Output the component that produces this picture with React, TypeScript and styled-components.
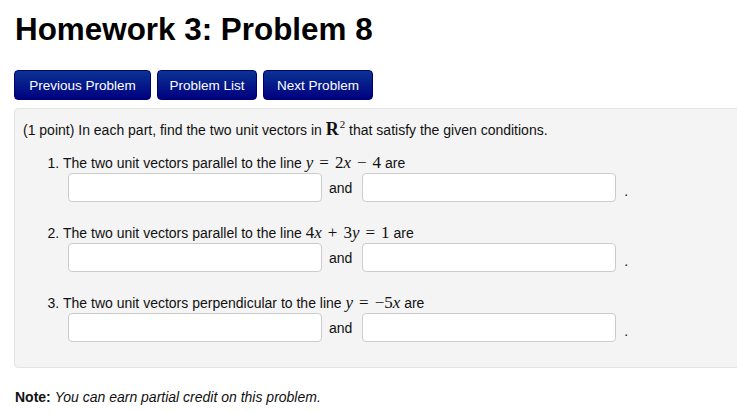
import styled, { createGlobalStyle } from "styled-components";

const Global = createGlobalStyle`
  body {
    margin: 0;
    background: #fff;
    font-family: "Liberation Sans", Arial, sans-serif;
    color: #111;
  }
`;

const Page = styled.div`
  padding: 12px 0 0 14px;
  overflow: hidden;
`;

const Title = styled.h1`
  margin: 0 0 0 1px;
  font-size: 31.4px;
  line-height: 36px;
  font-weight: bold;
  color: #000;
`;

const Nav = styled.div`
  display: flex;
  gap: 6px;
  margin-top: 22px;
`;

const NavButton = styled.button<{ $w: number }>`
  width: ${(p) => p.$w}px;
  height: 30px;
  padding: 0;
  border: 1px solid #00006a;
  border-radius: 4px;
  background: linear-gradient(to bottom, #0b3394, #000080);
  color: #fff;
  font-family: "Liberation Sans", Arial, sans-serif;
  font-size: 13.5px;
  cursor: pointer;
`;

const Well = styled.div`
  margin-top: 8px;
  margin-right: -20px;
  padding: 11px 8px 25px 8px;
  background: #f4f4f4;
  border: 1px solid #e3e3e3;
  border-radius: 4px;
  font-size: 14px;
  line-height: 18px;
`;

const Intro = styled.p`
  margin: 0;
`;

const Parts = styled.ol`
  margin: 15px 0 0 0;
  padding-left: 40px;
`;

const Part = styled.li`
  & + & {
    margin-top: 22px;
  }
`;

const Answers = styled.div`
  display: flex;
  align-items: center;
  margin: 1px 0 0 5px;
`;

const AnswerInput = styled.input`
  box-sizing: border-box;
  width: 254px;
  height: 29px;
  padding: 4px 6px;
  background: #fff;
  border: 1px solid #ccc;
  border-radius: 4px;
  font-size: 14px;
`;

const And = styled.span`
  margin: 0 10px 0 7px;
`;

const Period = styled.span`
  margin: 6px 0 0 8px;
`;

const MathSpan = styled.span`
  font-family: "Liberation Serif", "Times New Roman", serif;
  font-size: 17px;
  line-height: 1;
`;

const V = styled.i`
  font-family: "Liberation Serif", serif;
`;

const Op = styled.span`
  margin: 0 6px;
`;

const Bold = styled.b`
  font-family: "Liberation Serif", serif;
  font-size: 18px;
`;

const Sup = styled.sup`
  font-size: 11px;
  line-height: 0;
  margin-left: 1px;
`;

const Note = styled.p`
  margin: 20px 0 0 1px;
  font-size: 14px;
  line-height: 18px;
  em {
    font-style: italic;
  }
`;

function AnswerRow() {
  return (
    <Answers>
      <AnswerInput type="text" />
      <And>and</And>
      <AnswerInput type="text" />
      <Period>.</Period>
    </Answers>
  );
}

export default function App() {
  return (
    <Page>
      <Global />
      <Title>Homework 3: Problem 8</Title>
      <Nav>
        <NavButton $w={137}>Previous Problem</NavButton>
        <NavButton $w={100}>Problem List</NavButton>
        <NavButton $w={110}>Next Problem</NavButton>
      </Nav>
      <Well>
        <Intro>
          (1 point) In each part, find the two unit vectors in{" "}
          <MathSpan>
            <Bold>R</Bold>
            <Sup>2</Sup>
          </MathSpan>{" "}
          that satisfy the given conditions.
        </Intro>
        <Parts>
          <Part>
            The two unit vectors parallel to the line{" "}
            <MathSpan>
              <V>y</V>
              <Op>=</Op>2<V>x</V>
              <Op>−</Op>4
            </MathSpan>{" "}
            are
            <AnswerRow />
          </Part>
          <Part>
            The two unit vectors parallel to the line{" "}
            <MathSpan>
              4<V>x</V>
              <Op>+</Op>3<V>y</V>
              <Op>=</Op>1
            </MathSpan>{" "}
            are
            <AnswerRow />
          </Part>
          <Part>
            The two unit vectors perpendicular to the line{" "}
            <MathSpan>
              <V>y</V>
              <Op>=</Op>−5<V>x</V>
            </MathSpan>{" "}
            are
            <AnswerRow />
          </Part>
        </Parts>
      </Well>
      <Note>
        <b>Note:</b> <em>You can earn partial credit on this problem.</em>
      </Note>
    </Page>
  );
}
